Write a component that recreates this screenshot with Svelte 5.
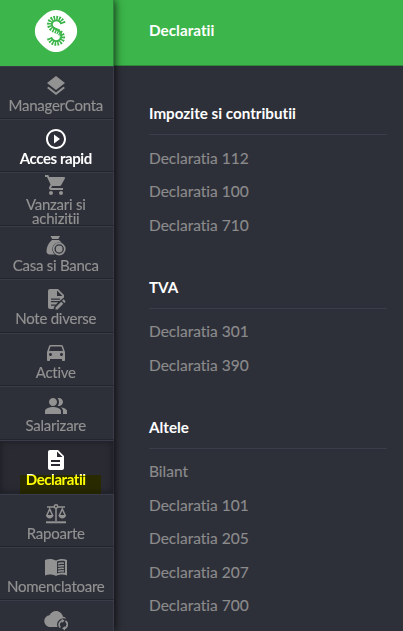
<script>
  const items = [
    { label: 'ManagerConta', icon: 'layers', h: 53 },
    { label: 'Acces rapid', icon: 'play', h: 53, bright: true },
    { label: 'Vanzari si achizitii', icon: 'cart', h: 54 },
    { label: 'Casa si Banca', icon: 'money', h: 53 },
    { label: 'Note diverse', icon: 'note', h: 54 },
    { label: 'Active', icon: 'car', h: 53 },
    { label: 'Salarizare', icon: 'people', h: 54 },
    { label: 'Declaratii', icon: 'doc', h: 54, bright: true, active: true },
    { label: 'Rapoarte', icon: 'scales', h: 53 },
    { label: 'Nomenclatoare', icon: 'book', h: 53 },
    { label: '', icon: 'cloud', h: 54 }
  ];
  const paths = {
    layers: 'M11.99 18.54l-7.37-5.73L3 14.07l9 7 9-7-1.63-1.27-7.38 5.74zM12 16l7.36-5.73L21 9l-9-7-9 7 1.63 1.27L12 16z',
    play: 'M10 16.5l6-4.5-6-4.5v9zM12 2C6.48 2 2 6.48 2 12s4.480 10 10 10 10-4.480 10-10S17.520 2 12 2zm0 18c-4.410 0-8-3.590-8-8s3.590-8 8-8 8 3.590 8 8-3.590 8-8 8z',
    cart: 'M7 18c-1.1 0-1.99.9-1.99 2S5.900 22 7 22s2-.9 2-2-.9-2-2-2zM1 2v2h2l3.600 7.590-1.350 2.450c-.16.28-.25.61-.25.960 0 1.100.9 2 2 2h12v-2H7.420c-.14 0-.25-.11-.25-.25l.03-.12.9-1.630h7.450c.75 0 1.410-.41 1.750-1.030l3.580-6.490c.08-.14.12-.31.12-.48 0-.55-.45-1-1-1H5.210l-.94-2H1zm16 16c-1.100 0-1.990.9-1.990 2s.89 2 1.990 2 2-.9 2-2-.9-2-2-2z',
    car: 'M18.920 5.010C18.720 4.420 18.160 4 17.500 4h-11c-.66 0-1.210.42-1.420 1.010L3 11v8c0 .55.45 1 1 1h1c.55 0 1-.45 1-1v-1h12v1c0 .55.45 1 1 1h1c.55 0 1-.45 1-1v-8l-2.080-5.990zM6.500 15c-.83 0-1.500-.67-1.500-1.500S5.670 12 6.500 12s1.500.67 1.500 1.500S7.330 15 6.500 15zm11 0c-.83 0-1.500-.67-1.500-1.500s.67-1.500 1.500-1.500 1.500.67 1.500 1.500-.67 1.500-1.500 1.500zM5 10l1.500-4.500h11L19 10H5z',
    people: 'M16.670 13.130C18.040 14.060 19 15.320 19 17v3h4v-3c0-2.180-3.570-3.470-6.330-3.870zM15 12c2.210 0 4-1.790 4-4s-1.790-4-4-4c-.47 0-.91.1-1.330.24C14.500 5.270 15 6.580 15 8s-.5 2.730-1.330 3.760c.42.14.86.24 1.330.24zM9 12c2.210 0 4-1.790 4-4s-1.790-4-4-4-4 1.790-4 4 1.790 4 4 4zm0 1c-2.670 0-8 1.340-8 4v3h16v-3c0-2.660-5.330-4-8-4z',
    doc: 'M14 2H6c-1.100 0-2 .9-2 2v16c0 1.100.9 2 2 2h12c1.100 0 2-.9 2-2V8l-6-6zm2 16H7v-2h9v2zm0-4H7v-2h9v2zm-3-5V3.500L18.500 9H13z'
  };
  const sections = [
    { title: 'Impozite si contributii', links: ['Declaratia 112', 'Declaratia 100', 'Declaratia 710'] },
    { title: 'TVA', links: ['Declaratia 301', 'Declaratia 390'] },
    { title: 'Altele', links: ['Bilant', 'Declaratia 101', 'Declaratia 205', 'Declaratia 207', 'Declaratia 700'] }
  ];
</script>

<div class="app">
  <aside class="rail">
    <div class="brand">
      <svg width="44" height="44" viewBox="0 0 44 44">
        <path fill="#fff" d="M22 .9C28 .9 31.800 3.900 36 8C40.100 12.200 43.100 16 43.100 22S40.100 31.800 36 36C31.800 40.100 28 43.100 22 43.100S12.200 40.100 8 36C3.900 31.800 .9 28 .9 22S3.900 12.200 8 8C12.200 3.900 16 .9 22 .9z" />
        <g fill="none" stroke="#3cb54a">
          <path stroke-width="5.400" stroke-dasharray="1.500 1" d="M29 14.500C27.500 9.800 22.500 8.200 18.700 10.200C15 12.200 14.900 17.200 17.700 19.500C20.200 21.500 23.500 21.800 26 23.800C29.500 26.700 29 31.500 25.500 33.300C21.500 35.300 16.800 33.500 15.500 28.800" />
          <path stroke-width="1.900" d="M27.500 15C26 11.500 22.500 10.600 20 12C17.200 13.700 17.200 16.800 19.200 18.400C21.500 20.200 24 20.600 26 22.800C28.200 26 27.800 29.700 25 31.400C22 33 18.500 31.800 17 28.500" />
        </g>
      </svg>
    </div>
    {#each items as item}
      <a class="item" class:bright={item.bright} class:active={item.active} style:height="{item.h}px">
        <svg width="24" height="24" viewBox="0 0 24 24" fill="currentColor">
          {#if paths[item.icon]}
            <path fill-rule="evenodd" d={paths[item.icon]} />
          {:else if item.icon === 'money'}
            <path d="M6.500 2h9.500l-1.700 3H8.200zM8 6h6.800c1.400 1.200 2.300 1.900 2.900 3A6.700 6.700 0 0 0 11 20.500H5.800C3.500 20.500 2.500 19 2.500 17c0-4 2.200-8.300 5.500-11z" />
            <circle cx="15.200" cy="15" r="5.600" fill="none" stroke="currentColor" stroke-width="1.700" />
            <circle cx="15.200" cy="15" r="3.400" />
          {:else if item.icon === 'note'}
            <path fill-rule="evenodd" d="M6 2h8l6 6v2.500L15.500 14H7v1.300h7L12 17.500H7v1.300h4l-1.200 1.700V22H6a2 2 0 0 1-2-2V4a2 2 0 0 1 2-2zm7 1.500V9h5.500zM7 11.500v1.300h9v-1.300z" />
            <path d="M11.500 20.400v2.100h2.100l5.700-5.700-2.100-2.100zM18.100 13.800l1-1c.3-.3.7-.3 1 0l1.200 1.200c.3.3.3.700 0 1l-1 1z" />
          {:else if item.icon === 'scales'}
            <g fill="none" stroke="currentColor" stroke-width="1.500">
              <circle cx="12" cy="4.500" r="1.700" />
              <path d="M3 5h7.300M13.700 5H21M12 6v13M2.500 14L5.700 7l3.200 7M15.100 14l3.200-7 3.200 7" />
              <path stroke-width="2" d="M2 20.300h20" />
            </g>
            <path d="M2 13h7.400c0 4.600-7.400 4.600-7.400 0zM14.600 13H22c0 4.600-7.400 4.600-7.400 0z" />
          {:else if item.icon === 'book'}
            <path fill-rule="evenodd" d="M1 5c3.500-1.700 8-1.300 11 .5C15 3.700 19.500 3.300 23 5v15.500c-3.500-1.500-8-1.200-11 .5-3-1.700-7.500-2-11-.5zm12 1.500v12c2.500-1 5.500-1.200 8-.7V6.200c-2.500-.6-5.500-.5-8 .3z" />
            <path fill="none" stroke="currentColor" stroke-width="1.500" d="M14 8.700c2-.7 4-.8 6-.5M14 11.300c2-.7 4-.8 6-.5M14 13.900c2-.7 4-.8 6-.5M14 16.500c2-.7 4-.8 6-.5" />
          {:else if item.icon === 'cloud'}
            <path d="M19 8.800C18.300 5.500 15.500 3 12 3 9.200 3 6.700 4.700 5.500 7.200 2.500 7.500.3 10 .3 13c0 3.300 2.700 6 6 6H13.500a6.500 6.500 0 0 1 8.700-8.200c-.7-1.200-1.800-1.900-3.200-2z" />
            <path fill="none" stroke="currentColor" stroke-width="1.700" d="M16.300 19.500a4.200 4.200 0 0 1 2.200-7M21.500 13a4.200 4.200 0 0 1-1.500 7.500" />
            <path d="M17.700 10.700l3 2-3 2.200zM21 18.300l-3 2 3 2.200z" />
          {/if}
        </svg>
        <span class="label">{item.label}</span>
        {#if item.active}<i class="marker"></i>{/if}
      </a>
    {/each}
  </aside>

  <main class="panel">
    <header>Declaratii</header>
    <div class="content">
      {#each sections as section}
        <section>
          <h2>{section.title}</h2>
          <ul>
            {#each section.links as link}<li>{link}</li>{/each}
          </ul>
        </section>
      {/each}
    </div>
  </main>
</div>

<style>
  :global(body) { overflow: hidden; background: #2e3039; }
  .app {
    display: flex;
    width: 403px;
    height: 631px;
    overflow: hidden;
    background: #2e3039;
    font-family: Lato, 'Liberation Sans', sans-serif;
    font-size: 15px;
    font-variant-ligatures: none;
  }
  .rail {
    position: relative;
    z-index: 1;
    width: 114px;
    flex: none;
    background: #2e3039;
    box-shadow: 1px 0 8px rgba(0, 0, 0, .75);
  }
  .brand {
    box-sizing: border-box;
    height: 66px;
    padding: 8.500px 0 0 34px;
    background: #3cb54a;
    border-right: 1px solid #33823d;
  }
  .brand svg, .item svg { display: block; flex: none; }
  .item {
    position: relative;
    box-sizing: border-box;
    display: flex;
    flex-direction: column;
    align-items: center;
    justify-content: center;
    padding: 0 1.500px 0 0;
    color: #929292;
    border-top: 1px solid #393b48;
    border-bottom: 1px solid #24252c;
    border-right: 1px solid #393b48;
  }
  .label {
    width: 100px;
    min-height: 14px;
    line-height: 14px;
    display: flex;
    justify-content: center;
    text-align: center;
    box-sizing: border-box;
    letter-spacing: -.25px;
    -webkit-text-stroke: .15px currentColor;
  }
  .bright { color: #fff; }
  .bright .label { font-weight: 700; letter-spacing: -.42px; -webkit-text-stroke: 0; }
  .active {
    background: #292a32;
    box-shadow: inset 0 0 7px rgba(0, 0, 0, .35);
    border-right-color: #292a32;
  }
  .marker {
    position: absolute;
    left: 20px;
    top: 34px;
    width: 81px;
    height: 20px;
    background: #ff0;
    mix-blend-mode: multiply;
  }
  .panel { flex: 1; }
  header {
    box-sizing: border-box;
    height: 66px;
    padding: 0 0 5px 35px;
    line-height: 60px;
    background: #3cb54a;
    border-bottom: 1px solid #30893b;
    color: #fff;
    font-size: 15.300px;
    font-weight: 700;
  }
  .content { padding: 28px 16.500px 0 35px; }
  section { margin-bottom: 25.200px; }
  h2 {
    margin: 0;
    height: 40px;
    line-height: 39px;
    border-bottom: 1px solid #3b3d4b;
    color: #fff;
    font-size: 15.200px;
    font-weight: 700;
  }
  ul { list-style: none; margin: 0; padding: 6.600px 0 .4px; }
  li {
    height: 33.500px;
    line-height: 33.500px;
    color: #8b8b8c;
    font-size: 15.500px;
    -webkit-text-stroke: .15px currentColor;
  }
</style>
